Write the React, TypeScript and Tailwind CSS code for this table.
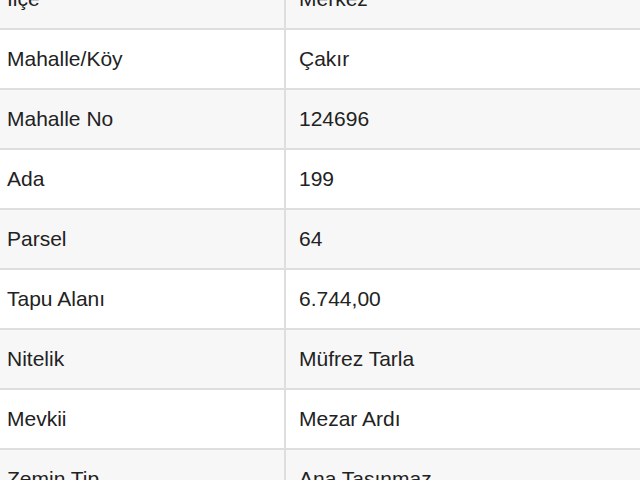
import React from 'react';

const rows: [string, string][] = [
  ['İlçe', 'Merkez'],
  ['Mahalle/Köy', 'Çakır'],
  ['Mahalle No', '124696'],
  ['Ada', '199'],
  ['Parsel', '64'],
  ['Tapu Alanı', '6.744,00'],
  ['Nitelik', 'Müfrez Tarla'],
  ['Mevkii', 'Mezar Ardı'],
  ['Zemin Tip', 'Ana Taşınmaz'],
];

export default function App() {
  return (
    <div
      className="w-[640px] h-[480px] overflow-hidden bg-white text-[#222222]"
      style={{ fontFamily: '"Liberation Sans", Arial, sans-serif' }}
    >
      <div className="-mt-[30px]">
        {rows.map(([label, value], i) => (
          <div
            key={label}
            className={`flex h-[60px] border-b-2 border-[#dedede] text-[21px] ${
              i % 2 === 0 ? 'bg-[#f7f7f7]' : 'bg-white'
            }`}
          >
            <div className="w-[286px] shrink-0 flex items-center pl-[7px] border-r-2 border-[#dedede]">
              {label}
            </div>
            <div className="flex-1 flex items-center pl-[13px]">{value}</div>
          </div>
        ))}
      </div>
    </div>
  );
}
